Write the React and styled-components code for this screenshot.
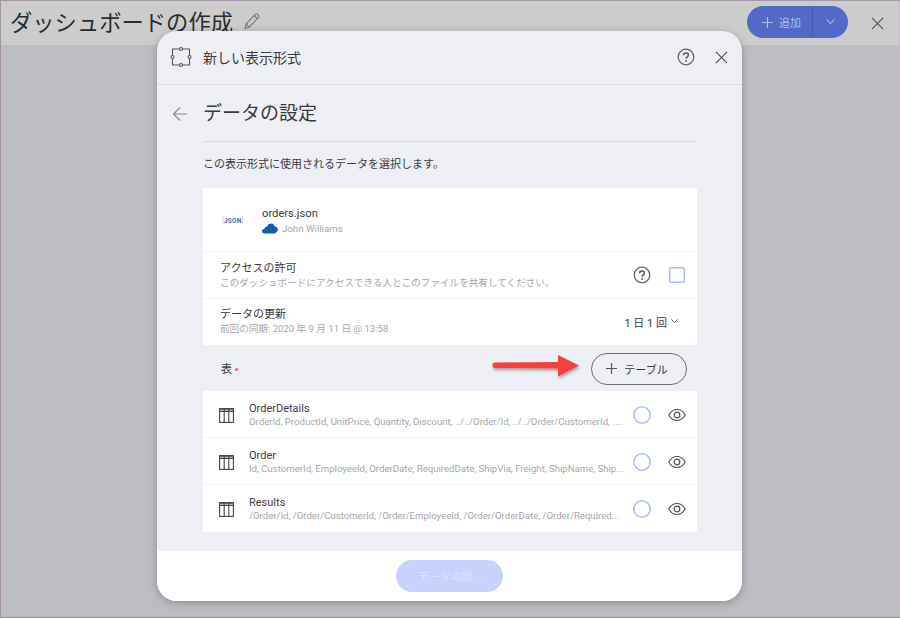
import React from 'react';
import styled, { createGlobalStyle } from 'styled-components';

const Global = createGlobalStyle`
  html, body {
    margin: 0;
    padding: 0;
  }
  body {
    font-family: Roboto, "Noto Sans CJK JP", sans-serif;
    color: #3a3a3c;
  }
`;

const tables = [
  {
    name: 'OrderDetails',
    fields: 'OrderId, ProductId, UnitPrice, Quantity, Discount, ../../Order/Id, ../../Order/CustomerId, ....',
  },
  {
    name: 'Order',
    fields: 'Id, CustomerId, EmployeeId, OrderDate, RequiredDate, ShipVia, Freight, ShipName, Ship...',
  },
  {
    name: 'Results',
    fields: '/Order/Id, /Order/CustomerId, /Order/EmployeeId, /Order/OrderDate, /Order/Required...',
  },
];

const CloseIcon = ({ size = 13 }) => (
  <svg width={size} height={size} viewBox="0 0 14 14" fill="none" stroke="#555" strokeWidth="1.3">
    <path d="M1 1l12 12M13 1L1 13" />
  </svg>
);

const HelpIcon = () => (
  <svg width="18" height="18" viewBox="0 0 18 18" fill="none">
    <circle cx="9" cy="9" r="7.8" stroke="#666" strokeWidth="1.3" />
    <path d="M6.600 7.200c0-1.400 1-2.300 2.400-2.300s2.400.9 2.400 2.100c0 1.900-2.400 1.900-2.400 3.800" stroke="#555" strokeWidth="1.5" />
    <circle cx="9" cy="13" r="0.9" fill="#555" />
  </svg>
);

const PlusIcon = ({ color }) => (
  <svg width="11" height="11" viewBox="0 0 11 11" fill="none" stroke={color} strokeWidth="1.2">
    <path d="M5.500 0v11M0 5.500h11" />
  </svg>
);

const VisualizationIcon = () => (
  <svg width="22" height="22" viewBox="0 0 22 22" fill="none" stroke="#555" strokeWidth="1.100">
    <path d="M9.300 3H2.500v6.300M12.700 3h6.800v6.300M19.500 12.700V19h-6.800M9.300 19H2.500v-6.300" />
    <circle cx="11" cy="3" r="1.500" />
    <circle cx="11" cy="19" r="1.500" />
    <circle cx="2.500" cy="11" r="1.500" />
    <circle cx="19.500" cy="11" r="1.500" />
  </svg>
);

const PencilIcon = () => (
  <svg width="18" height="18" viewBox="0 0 18 18" fill="none" stroke="#777" strokeWidth="1.100">
    <path d="M2 16.500l1-4.500L12.500 2.200c.5-.5 1.200-.5 1.700 0l1.400 1.400c.5.500.5 1.200 0 1.700L6 15.200zM3 12l3 3.200M11.300 3.500l3 3.100" />
  </svg>
);

const BackIcon = () => (
  <svg width="16" height="16" viewBox="0 0 16 16" fill="none" stroke="#8a8a8e" strokeWidth="1.200">
    <path d="M15 8H1.500M8 1.500L1.500 8 8 14.500" />
  </svg>
);

const CloudIcon = () => (
  <svg width="16" height="11" viewBox="0 0 16 11">
    <path
      fill="#0f5eb0"
      d="M5.600 10.500H2.400C1 10.500 0 9.600 0 8.300 0 7 1 6.100 2.300 6.100 2.500 4.600 3.700 3.600 5.200 3.600c.5-1.700 1.900-3 3.800-3 1.900 0 3.300 1.200 3.700 2.900C14.500 3.700 16 5.100 16 7c0 .2 0 .3-.1.500L13 10.500z"
    />
  </svg>
);

const TableIcon = () => (
  <svg width="15" height="15" viewBox="0 0 15 15" fill="none" stroke="#444" strokeWidth="1.100">
    <rect x="0.600" y="0.600" width="13.800" height="13.800" />
    <path d="M0.600 3.500h13.800M5.200 0.600v13.800M9.800 0.600v13.800" />
    <path d="M0.600 1.800h13.800" />
  </svg>
);

const EyeIcon = () => (
  <svg width="18" height="14" viewBox="0 0 18 14" fill="none" stroke="#555" strokeWidth="1.200">
    <path d="M0.800 7C2.800 3.300 5.600 1.500 9 1.500s6.200 1.800 8.200 5.500c-2 3.700-4.800 5.500-8.200 5.500S2.800 10.700.8 7z" />
    <circle cx="9" cy="7" r="2.800" />
  </svg>
);

const ChevronIcon = ({ color = '#444', size = 7 }) => (
  <svg width={size} height={size * 0.6} viewBox="0 0 10 6" fill="none" stroke={color} strokeWidth="1.200">
    <path d="M0.500 0.500L5 5l4.500-4.500" />
  </svg>
);

const RedArrow = () => (
  <svg width="100" height="36" viewBox="0 0 100 36">
    <defs>
      <filter id="arrowShadow" x="-10%" y="-30%" width="120%" height="170%">
        <feDropShadow dx="1" dy="2" stdDeviation="1.800" floodColor="#000" floodOpacity="0.35" />
      </filter>
    </defs>
    <path
      d="M10 14.500L73 14V7l21 10.500L73 28.500V20.500L10 20c-3.500 0-3.500-5.500 0-5.500z"
      fill="#f44040"
      filter="url(#arrowShadow)"
    />
  </svg>
);

const Page = styled.div`
  position: relative;
  width: 900px;
  height: 618px;
  box-sizing: border-box;
  overflow: hidden;
  background: #bcbdc2;
  border: 1px solid #a595a5;
  border-bottom-color: #8d8d90;
  border-right-color: #c4bcc4;
`;

const TopBar = styled.header`
  height: 44px;
  background: #cccccc;
  display: flex;
  align-items: center;
  padding: 0 15px 4px 9px;
  box-sizing: border-box;
`;

const PageTitle = styled.h1`
  margin: 0 10px 0 0;
  font-size: 22.300px;
  font-weight: 400;
  color: #2c2c2e;
`;

const SplitButton = styled.div`
  margin-left: auto;
  margin-top: 2px;
  display: flex;
  height: 32px;
  border-radius: 16px;
  overflow: hidden;
  background: #5369c8;
  color: #b2bbe6;
  font-size: 11px;
`;

const SplitMain = styled.div`
  width: 66px;
  display: flex;
  align-items: center;
  gap: 6px;
  padding-left: 15px;
  box-sizing: border-box;
  white-space: nowrap;
  border-right: 1px solid #4659b0;
`;

const SplitSide = styled.div`
  width: 35px;
  display: flex;
  align-items: center;
  justify-content: center;
`;

const TopClose = styled.div`
  margin-left: 23px;
  margin-top: 4px;
  display: flex;
`;

const Modal = styled.section`
  position: absolute;
  left: 156px;
  top: 30px;
  width: 585px;
  height: 570px;
  display: flex;
  flex-direction: column;
  background: #eeeff4;
  border-radius: 20px;
  overflow: hidden;
  box-shadow: 0 2px 8px rgba(0, 0, 0, 0.25);
`;

const ModalHeader = styled.div`
  height: 54px;
  flex: none;
  display: flex;
  align-items: center;
  padding: 0 14px 1px 13px;
  border-bottom: 1px solid #dcdde2;
  box-sizing: border-box;
`;

const ModalTitle = styled.div`
  font-size: 14px;
  margin-left: 11px;
  color: #3a3a3c;
`;

const HeaderIcons = styled.div`
  margin-left: auto;
  display: flex;
  align-items: center;
  gap: 20px;
`;

const ModalBody = styled.div`
  flex: 1;
  padding: 0 45px 0 46px;
`;

const StepHeader = styled.div`
  position: relative;
  height: 57px;
  box-sizing: border-box;
  padding-bottom: 4px;
  display: flex;
  align-items: center;
  border-bottom: 1px solid #d9dae0;
`;

const BackButton = styled.div`
  position: absolute;
  left: -31px;
  top: 21px;
  display: flex;
`;

const StepTitle = styled.h2`
  margin: 0;
  font-size: 19px;
  font-weight: 400;
  color: #3a3a3c;
`;

const Hint = styled.p`
  margin: 0;
  height: 46px;
  line-height: 46px;
  font-size: 11px;
  color: #3a3a3c;
`;

const Card = styled.div`
  background: #fff;
`;

const FileRow = styled.div`
  height: 64px;
  box-sizing: border-box;
  display: flex;
  align-items: center;
  border-bottom: 1px solid #f2f3f6;
  padding: 3px 0 0 19px;
`;

const JsonBadge = styled.div`
  width: 40px;
  font-size: 6.500px;
  font-weight: 700;
  color: #3f6fb0;
  letter-spacing: 0.2px;
`;

const Bracket = styled.span`
  color: #b5c3d8;
  font-weight: 400;
`;

const FileName = styled.div`
  font-size: 11.200px;
  line-height: 15px;
  color: #3a3a3c;
`;

const FileOwner = styled.div`
  display: flex;
  align-items: center;
  gap: 4px;
  font-size: 9.700px;
  line-height: 15px;
  color: #a6a6aa;
`;

const SettingRow = styled.div`
  height: ${(p) => (p.$last ? '46px' : '47px')};
  box-sizing: border-box;
  display: flex;
  align-items: center;
  justify-content: space-between;
  padding: 0 12px 0 17px;
  border-bottom: 1px solid ${(p) => (p.$last ? 'transparent' : '#f2f3f6')};
`;

const SettingTitle = styled.div`
  font-size: 11px;
  line-height: 15px;
  color: #3a3a3c;
`;

const SettingSub = styled.div`
  font-size: 9.600px;
  line-height: 14px;
  color: #a6a6aa;
`;

const SettingControls = styled.div`
  display: flex;
  align-items: center;
  gap: 18px;
`;

const Checkbox = styled.div`
  width: 16px;
  height: 16px;
  box-shadow: inset 0 0 0 1.500px #a9bbff;
  border-radius: 2px;
`;

const Frequency = styled.div`
  display: flex;
  align-items: center;
  gap: 4px;
  margin-right: 7px;
  font-size: 11px;
  color: #3a3a3c;
`;

const TablesHeader = styled.div`
  position: relative;
  height: 46px;
  display: flex;
  align-items: center;
  justify-content: space-between;
  padding: 0 10px 0 18px;
`;

const TablesLabel = styled.div`
  display: flex;
  align-items: center;
  font-size: 11px;
  color: #3a3a3c;
`;

const Required = styled.span`
  width: 3px;
  height: 3px;
  margin: 3px 0 0 3px;
  border-radius: 50%;
  background: #f0616d;
`;

const OutlineButton = styled.div`
  width: 96px;
  height: 32px;
  margin-top: 1px;
  padding-right: 4px;
  box-sizing: border-box;
  border: 1px solid #6e6e72;
  border-radius: 16px;
  display: flex;
  align-items: center;
  justify-content: center;
  gap: 7px;
  font-size: 11px;
  color: #3a3a3c;
`;

const ArrowMark = styled.div`
  position: absolute;
  left: 282px;
  top: 3px;
  display: flex;
`;

const TableRow = styled.div`
  height: 47px;
  box-sizing: border-box;
  display: flex;
  align-items: center;
  padding: 2px 11px 0 16px;
  border-bottom: 1px solid ${(p) => (p.$last ? 'transparent' : '#f2f3f6')};
`;

const TableText = styled.div`
  margin-left: 15px;
  width: 375px;
`;

const TableName = styled.div`
  font-size: 11px;
  line-height: 13px;
  color: #3a3a3c;
`;

const TableFields = styled.div`
  font-size: 9.600px;
  line-height: 13px;
  color: #a6a6aa;
  white-space: nowrap;
`;

const RowControls = styled.div`
  margin-left: auto;
  display: flex;
  align-items: center;
  gap: 17px;
`;

const Radio = styled.div`
  width: 18px;
  height: 18px;
  box-shadow: inset 0 0 0 1.500px #a9bbff;
  border-radius: 50%;
`;

const ModalFooter = styled.div`
  height: 50px;
  flex: none;
  background: #fff;
  display: flex;
  align-items: center;
  justify-content: center;
`;

const LoadButton = styled.div`
  width: 107px;
  height: 32px;
  border-radius: 16px;
  background: #c7d2fd;
  color: #dde4fe;
  font-size: 11px;
  display: flex;
  align-items: center;
  justify-content: center;
`;

export default function App() {
  return (
    <Page>
      <Global />
      <TopBar>
        <PageTitle>ダッシュボードの作成</PageTitle>
        <PencilIcon />
        <SplitButton>
          <SplitMain>
            <PlusIcon color="#b2bbe6" />
            追加
          </SplitMain>
          <SplitSide>
            <ChevronIcon color="#a8b2e2" size={9} />
          </SplitSide>
        </SplitButton>
        <TopClose>
          <CloseIcon />
        </TopClose>
      </TopBar>

      <Modal>
        <ModalHeader>
          <VisualizationIcon />
          <ModalTitle>新しい表示形式</ModalTitle>
          <HeaderIcons>
            <HelpIcon />
            <CloseIcon />
          </HeaderIcons>
        </ModalHeader>

        <ModalBody>
          <StepHeader>
            <BackButton>
              <BackIcon />
            </BackButton>
            <StepTitle>データの設定</StepTitle>
          </StepHeader>
          <Hint>この表示形式に使用されるデータを選択します。</Hint>

          <Card>
            <FileRow>
              <JsonBadge>
                <Bracket>[</Bracket>JSON<Bracket>]</Bracket>
              </JsonBadge>
              <div>
                <FileName>orders.json</FileName>
                <FileOwner>
                  <CloudIcon />
                  John Williams
                </FileOwner>
              </div>
            </FileRow>
            <SettingRow>
              <div>
                <SettingTitle>アクセスの許可</SettingTitle>
                <SettingSub>このダッシュボードにアクセスできる人とこのファイルを共有してください。</SettingSub>
              </div>
              <SettingControls>
                <HelpIcon />
                <Checkbox />
              </SettingControls>
            </SettingRow>
            <SettingRow $last>
              <div>
                <SettingTitle>データの更新</SettingTitle>
                <SettingSub>前回の同期: 2020 年 9 月 11 日 @ 13:58</SettingSub>
              </div>
              <Frequency>
                1 日 1 回
                <ChevronIcon />
              </Frequency>
            </SettingRow>
          </Card>

          <TablesHeader>
            <TablesLabel>
              表<Required />
            </TablesLabel>
            <ArrowMark>
              <RedArrow />
            </ArrowMark>
            <OutlineButton>
              <PlusIcon color="#555" />
              テーブル
            </OutlineButton>
          </TablesHeader>

          <Card>
            {tables.map((t, i) => (
              <TableRow key={t.name} $last={i === tables.length - 1}>
                <TableIcon />
                <TableText>
                  <TableName>{t.name}</TableName>
                  <TableFields>{t.fields}</TableFields>
                </TableText>
                <RowControls>
                  <Radio />
                  <EyeIcon />
                </RowControls>
              </TableRow>
            ))}
          </Card>
        </ModalBody>

        <ModalFooter>
          <LoadButton>データの読...</LoadButton>
        </ModalFooter>
      </Modal>
    </Page>
  );
}
